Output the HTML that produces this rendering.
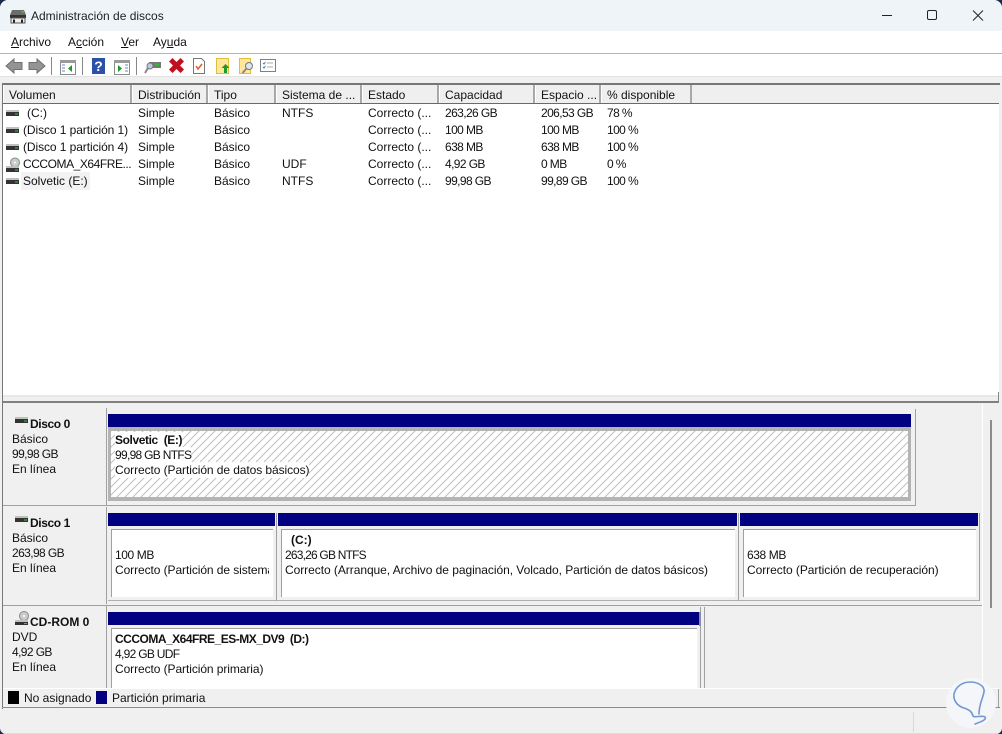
<!DOCTYPE html>
<html><head><meta charset="utf-8"><style>
html,body{margin:0;padding:0;background:#1a2a4a;width:1002px;height:734px;overflow:hidden}
#w{position:absolute;left:0;top:0;width:1002px;height:734px;background:#f0f0f0;border-radius:8px 8px 6px 6px;overflow:hidden;font:12px "Liberation Sans",sans-serif;color:#111}
#w div{position:absolute}
.t{white-space:nowrap;line-height:16px;height:16px}
.b{font-weight:bold}
.d{letter-spacing:-.6px}
.e{letter-spacing:-.08px}
.n{background:#000080;height:13px}
.l{background:#a0a0a0}
u{text-decoration:underline}
svg{position:absolute;overflow:visible}
.h{top:85px;height:18px;background:#efefef;border-right:2px solid #a8a8a8;box-sizing:border-box;border-left:1px solid #fff;line-height:20px;padding-left:5px;white-space:nowrap}
</style></head><body><div id="w">
<!-- title -->
<div style="left:0;top:0;width:1002px;height:31px;background:#eff4f9"></div>
<svg style="left:9px;top:9px" width="18" height="15" viewBox="0 0 18 15"><path d="M3 1h12l2 5H1z" fill="#6c6c6c"/><rect x="1" y="6" width="16" height="3" fill="#333"/><rect x="12" y="2" width="3" height="1.5" fill="#3c3"/><rect x="2" y="9" width="14" height="5" fill="#eee" stroke="#555"/><rect x="4" y="10.5" width="2" height="3" fill="#222"/><rect x="12" y="10.5" width="2" height="3" fill="#222"/></svg>
<div class="t" style="left:31px;top:8px;font-size:12px;color:#222">Administración de discos</div>
<svg style="left:880px;top:8px" width="110" height="16" viewBox="0 0 110 16" fill="none" stroke="#222" stroke-width="1"><path d="M2 7.5H12"/><rect x="47.5" y="2.5" width="9" height="9" rx="1.5"/><path d="M93 2.5l10 10M103 2.5l-10 10"/></svg>
<!-- menu -->
<div style="left:0;top:31px;width:1002px;height:22px;background:#fff"></div>
<div style="left:0;top:53px;width:1002px;height:1px;background:#b4b4bc"></div>
<div class="t" style="left:11px;top:34px"><u>A</u>rchivo</div>
<div class="t" style="left:68px;top:34px">A<u>c</u>ción</div>
<div class="t" style="left:121px;top:34px"><u>V</u>er</div>
<div class="t" style="left:153px;top:34px">Ay<u>u</u>da</div>
<!-- toolbar -->
<div style="left:0;top:54px;width:1002px;height:22px;background:#fff"></div>
<svg style="left:0;top:54px" width="290" height="22" viewBox="0 0 290 22">
<path d="M6 12l8-7v3.500h8v7h-8V19z" fill="#949494" stroke="#707070"/>
<path d="M45 12l-8-7v3.500h-8v7h8V19z" fill="#949494" stroke="#707070"/>
<rect x="51" y="3" width="1" height="18" fill="#888"/>
<rect x="60.500" y="6.500" width="15" height="14" fill="#fff" stroke="#8a8a8a"/><rect x="60" y="6" width="16" height="3" fill="#9a9a9a"/><path d="M72 11v7l-4-3.500z" fill="#1a9a2a"/><path d="M62 11h3M62 14h3M62 17h3" stroke="#6a8ac0"/>
<rect x="82" y="3" width="1" height="18" fill="#888"/>
<rect x="92" y="4" width="13" height="16" fill="#2c52a8"/><text x="98.500" y="17" text-anchor="middle" font-family="Liberation Sans" font-weight="bold" font-size="14" fill="#fff">?</text>
<rect x="114.500" y="6.500" width="15" height="14" fill="#fff" stroke="#8a8a8a"/><rect x="114" y="6" width="16" height="3" fill="#9a9a9a"/><path d="M118 11v7l4-3.500z" fill="#1a9a2a"/><path d="M125 11h3M125 14h3M125 17h3" stroke="#6a8ac0"/>
<rect x="136" y="3" width="1" height="18" fill="#888"/>
<rect x="149" y="8" width="12" height="6" fill="#777"/><rect x="155" y="9.500" width="4" height="2" fill="#2c2"/><circle cx="150" cy="12" r="3" fill="#bcd" stroke="#777"/><path d="M148 14l-3 5" stroke="#888" stroke-width="2"/>
<path d="M169 8l3.500-3.500 4 4 4-4L184 8l-4 4 4 4-3.500 3.500-4-4-4 4L169 16l4-4z" fill="#c01020" transform="translate(0,-.5)"/>
<path d="M193.500 4.500h8l3 3v12h-11z" fill="#fff" stroke="#777"/><path d="M196 12l2 3 4-5" fill="none" stroke="#e25a20" stroke-width="1.500"/>
<rect x="216.500" y="4.500" width="12" height="15" fill="#ffe89a" stroke="#e0bc40"/><path d="M225.500 10l4 4h-2.500v5h-3v-5H221.500z" fill="#1f9a2a"/>
<rect x="239.500" y="4.500" width="11" height="15" fill="#ffe89a" stroke="#e0bc40"/><circle cx="249" cy="12" r="3.500" fill="#dbe6f2" stroke="#777"/><path d="M246.500 14.500l-4 4.500" stroke="#888" stroke-width="2"/>
<rect x="260.500" y="5.500" width="15" height="12" fill="#fff" stroke="#808080"/><path d="M263 9l1 1 1.500-2M263 13l1 1 1.500-2" fill="none" stroke="#2a80d0"/><path d="M267 9h6M267 13h6" stroke="#aaa"/>
</svg>
<div style="left:0;top:76px;width:1002px;height:1px;background:#e2e2e2"></div>
<!-- list frame -->
<div style="left:2px;top:83px;width:998px;height:2px;background:#777"></div>
<div style="left:2px;top:83px;width:1px;height:626px;background:#777"></div>
<div style="left:3px;top:85px;width:996px;height:18px;background:#efefef"></div>
<div style="left:3px;top:103px;width:996px;height:1px;background:#6a6a6a"></div>
<div style="left:3px;top:104px;width:996px;height:291px;background:#fff"></div>
<div class="h" style="left:3px;width:129px">Volumen</div>
<div class="h" style="left:132px;width:76px">Distribución</div>
<div class="h" style="left:208px;width:68px">Tipo</div>
<div class="h" style="left:276px;width:86px">Sistema de ...</div>
<div class="h" style="left:362px;width:77px">Estado</div>
<div class="h" style="left:439px;width:96px">Capacidad</div>
<div class="h" style="left:535px;width:66px">Espacio ...</div>
<div class="h" style="left:601px;width:91px">% disponible</div>
<!-- rows -->
<svg style="left:6px;top:108px" width="14" height="80" viewBox="0 0 14 80">
<g><rect x="0" y="2" width="13" height="2" fill="#c0c0c0"/><rect x="0" y="4" width="13" height="4" fill="#333"/><rect x="9" y="5.500" width="3" height="1" fill="#3c3"/></g>
<g transform="translate(0,17)"><rect x="0" y="2" width="13" height="2" fill="#c0c0c0"/><rect x="0" y="4" width="13" height="4" fill="#333"/><rect x="9" y="5.500" width="3" height="1" fill="#3c3"/></g>
<g transform="translate(0,34)"><rect x="0" y="2" width="13" height="2" fill="#c0c0c0"/><rect x="0" y="4" width="13" height="4" fill="#333"/><rect x="9" y="5.500" width="3" height="1" fill="#3c3"/></g>
<g transform="translate(0,50)"><circle cx="9" cy="4.500" r="4.500" fill="#ccc" stroke="#888"/><circle cx="9" cy="4.500" r="1" fill="#fff"/><rect x="0" y="8" width="13" height="2" fill="#c0c0c0"/><rect x="0" y="10" width="13" height="4" fill="#333"/><rect x="9" y="11.500" width="3" height="1" fill="#3c3"/></g>
<g transform="translate(0,68)"><rect x="0" y="2" width="13" height="2" fill="#c0c0c0"/><rect x="0" y="4" width="13" height="4" fill="#333"/><rect x="9" y="5.500" width="3" height="1" fill="#3c3"/></g>
</svg>
<div style="left:21px;top:172px;width:69px;height:18px;background:#f2f2f2"></div>
<div class="t" style="left:27px;top:105px">(C:)</div><div class="t" style="left:138px;top:105px">Simple</div><div class="t" style="left:214px;top:105px">Básico</div><div class="t" style="left:282px;top:105px">NTFS</div><div class="t" style="left:368px;top:105px">Correcto (...</div><div class="t d" style="left:445px;top:105px">263,26 GB</div><div class="t d" style="left:541px;top:105px">206,53 GB</div><div class="t d" style="left:607px;top:105px">78 %</div>
<div class="t e" style="left:23px;top:122px">(Disco 1 partición 1)</div><div class="t" style="left:138px;top:122px">Simple</div><div class="t" style="left:214px;top:122px">Básico</div><div class="t" style="left:368px;top:122px">Correcto (...</div><div class="t d" style="left:445px;top:122px">100 MB</div><div class="t d" style="left:541px;top:122px">100 MB</div><div class="t d" style="left:607px;top:122px">100 %</div>
<div class="t e" style="left:23px;top:139px">(Disco 1 partición 4)</div><div class="t" style="left:138px;top:139px">Simple</div><div class="t" style="left:214px;top:139px">Básico</div><div class="t" style="left:368px;top:139px">Correcto (...</div><div class="t d" style="left:445px;top:139px">638 MB</div><div class="t d" style="left:541px;top:139px">638 MB</div><div class="t d" style="left:607px;top:139px">100 %</div>
<div class="t" style="left:23px;top:156px;letter-spacing:-.45px">CCCOMA_X64FRE...</div><div class="t" style="left:138px;top:156px">Simple</div><div class="t" style="left:214px;top:156px">Básico</div><div class="t" style="left:282px;top:156px">UDF</div><div class="t" style="left:368px;top:156px">Correcto (...</div><div class="t d" style="left:445px;top:156px">4,92 GB</div><div class="t d" style="left:541px;top:156px">0 MB</div><div class="t d" style="left:607px;top:156px">0 %</div>
<div class="t" style="left:23px;top:173px">Solvetic (E:)</div><div class="t" style="left:138px;top:173px">Simple</div><div class="t" style="left:214px;top:173px">Básico</div><div class="t" style="left:282px;top:173px">NTFS</div><div class="t" style="left:368px;top:173px">Correcto (...</div><div class="t d" style="left:445px;top:173px">99,98 GB</div><div class="t d" style="left:541px;top:173px">99,89 GB</div><div class="t d" style="left:607px;top:173px">100 %</div>
<!-- splitter -->
<div style="left:3px;top:395px;width:996px;height:2px;background:#e8e8e8"></div>
<div style="left:3px;top:401px;width:996px;height:2px;background:#808080"></div>
<div style="left:998px;top:392px;width:1px;height:11px;background:#888"></div>
<!-- disk area -->
<div style="left:3px;top:403px;width:996px;height:286px;background:#f0f0f0"></div>
<div style="left:982px;top:404px;width:1px;height:285px;background:#fff"></div>
<div style="left:990px;top:420px;width:2px;height:188px;background:#8c8c8c"></div>
<!-- disk 0 -->
<div style="left:106px;top:408px;width:1px;height:97px;background:#a0a0a0"></div>
<div class="l" style="left:3px;top:505px;width:103px;height:1px"></div>
<svg style="left:15px;top:417px" width="14" height="10"><rect x="0" y="0" width="13" height="2" fill="#c0c0c0"/><rect x="0" y="2" width="13" height="4" fill="#333"/><rect x="9" y="3.500" width="3" height="1" fill="#3c3"/></svg>
<div class="t b" style="left:30px;top:416px;letter-spacing:-.4px">Disco 0</div>
<div class="t" style="left:12px;top:431px">Básico</div>
<div class="t d" style="left:12px;top:446px">99,98 GB</div>
<div class="t" style="left:12px;top:461px">En línea</div>
<div style="left:915px;top:409px;width:1px;height:96px;background:#a0a0a0"></div>
<div style="left:106px;top:505px;width:810px;height:1px;background:#a0a0a0"></div>
<div class="n" style="left:108px;top:414px;width:803px"></div>
<div style="left:108px;top:427px;width:803px;height:74px;background:#b4b4b4"></div>
<svg style="left:111px;top:431px" width="797" height="66"><defs><pattern id="hp" width="8" height="8" patternUnits="userSpaceOnUse"><rect width="8" height="8" fill="#fff"/><path d="M-1 9L9-1M-1 1L1-1M7 9L9 7" stroke="#b8b8b8" stroke-width=".9"/></pattern></defs><rect width="797" height="66" fill="url(#hp)"/></svg>
<div class="t b" style="left:115px;top:432px;background:#fff;letter-spacing:-.4px">Solvetic&nbsp; (E:)</div>
<div class="t" style="left:115px;top:447px;background:#fff;letter-spacing:-.7px">99,98 GB NTFS</div>
<div class="t e" style="left:115px;top:462px;background:#fff">Correcto (Partición de datos básicos)</div>
<!-- disk 1 -->
<div style="left:106px;top:507px;width:1px;height:97px;background:#a0a0a0"></div>
<div class="l" style="left:3px;top:605px;width:103px;height:1px"></div>
<svg style="left:15px;top:516px" width="14" height="10"><rect x="0" y="0" width="13" height="2" fill="#c0c0c0"/><rect x="0" y="2" width="13" height="4" fill="#333"/><rect x="9" y="3.500" width="3" height="1" fill="#3c3"/></svg>
<div class="t b" style="left:30px;top:515px;letter-spacing:-.4px">Disco 1</div>
<div class="t" style="left:12px;top:530px">Básico</div>
<div class="t d" style="left:12px;top:545px">263,98 GB</div>
<div class="t" style="left:12px;top:560px">En línea</div>
<div style="left:106px;top:605px;width:876px;height:1px;background:#a0a0a0"></div>
<div style="left:108px;top:600px;width:871px;height:1px;background:#b0b0b0"></div>
<div style="left:979px;top:513px;width:1px;height:88px;background:#a0a0a0"></div>
<div class="n" style="left:108px;top:513px;width:167px"></div>
<div class="n" style="left:278px;top:513px;width:459px"></div>
<div class="n" style="left:740px;top:513px;width:238px"></div>
<div class="l" style="left:276px;top:513px;width:1px;height:88px"></div>
<div class="l" style="left:738px;top:513px;width:1px;height:88px"></div>
<div style="left:108px;top:527px;width:167px;height:73px;background:#f0f0f0"></div>
<div style="left:111px;top:529px;width:162px;height:68px;background:#fff;border-top:1px solid #a0a0a0;border-left:1px solid #a0a0a0;box-sizing:border-box"></div>
<div style="left:278px;top:527px;width:459px;height:73px;background:#f0f0f0"></div>
<div style="left:281px;top:529px;width:454px;height:68px;background:#fff;border-top:1px solid #a0a0a0;border-left:1px solid #a0a0a0;box-sizing:border-box"></div>
<div style="left:740px;top:527px;width:238px;height:73px;background:#f0f0f0"></div>
<div style="left:743px;top:529px;width:233px;height:68px;background:#fff;border-top:1px solid #a0a0a0;border-left:1px solid #a0a0a0;box-sizing:border-box"></div>
<div class="t" style="left:115px;top:547px;letter-spacing:-.4px">100 MB</div>
<div class="t e" style="left:115px;top:562px;width:154px;overflow:hidden">Correcto (Partición de sistema)</div>
<div class="t b" style="left:291px;top:532px">(C:)</div>
<div class="t" style="left:285px;top:547px;letter-spacing:-.8px">263,26 GB NTFS</div>
<div class="t" style="left:285px;top:562px;letter-spacing:-.05px">Correcto (Arranque, Archivo de paginación, Volcado, Partición de datos básicos)</div>
<div class="t" style="left:747px;top:547px;letter-spacing:-.4px">638 MB</div>
<div class="t" style="left:747px;top:562px;letter-spacing:-.05px">Correcto (Partición de recuperación)</div>
<!-- cdrom -->
<div style="left:106px;top:606px;width:1px;height:83px;background:#a0a0a0"></div>
<div style="left:704px;top:607px;width:1px;height:82px;background:#a0a0a0"></div>
<div style="left:700px;top:607px;width:1px;height:82px;background:#a0a0a0"></div>
<svg style="left:15px;top:611px" width="15" height="15"><circle cx="9" cy="5" r="4.500" fill="#ccc" stroke="#888"/><circle cx="9" cy="5" r="1" fill="#fff"/><rect x="0" y="9" width="13" height="2" fill="#c0c0c0"/><rect x="0" y="11" width="13" height="3" fill="#333"/><rect x="9" y="12" width="3" height="1" fill="#3c3"/></svg>
<div class="t b" style="left:30px;top:614px">CD-ROM 0</div>
<div class="t" style="left:12px;top:629px">DVD</div>
<div class="t d" style="left:12px;top:644px">4,92 GB</div>
<div class="t" style="left:12px;top:659px">En línea</div>
<div class="n" style="left:108px;top:612px;width:591px"></div>
<div style="left:699px;top:612px;width:2px;height:14px;background:#8a8aa0"></div>
<div style="left:111px;top:628px;width:586px;height:61px;background:#fff;border-top:1px solid #a0a0a0;border-left:1px solid #a0a0a0;box-sizing:border-box"></div>
<div class="t b" style="left:115px;top:631px;letter-spacing:-.5px">CCCOMA_X64FRE_ES-MX_DV9&nbsp; (D:)</div>
<div class="t" style="left:115px;top:646px;letter-spacing:-.7px">4,92 GB UDF</div>
<div class="t e" style="left:115px;top:661px">Correcto (Partición primaria)</div>
<!-- legend -->
<div style="left:3px;top:688px;width:996px;height:1px;background:#fff"></div>
<div style="left:3px;top:689px;width:996px;height:18px;background:#f0f0f0"></div>
<div style="left:8px;top:691px;width:11px;height:13px;background:#000"></div>
<div class="t" style="left:24px;top:690px">No asignado</div>
<div style="left:96px;top:691px;width:11px;height:13px;background:#000080"></div>
<div class="t" style="left:112px;top:690px">Partición primaria</div>
<div style="left:2px;top:707px;width:998px;height:1px;background:#8c8c8c"></div>
<div style="left:998px;top:689px;width:1px;height:18px;background:#a0a0a0"></div>
<div style="left:913px;top:712px;width:1px;height:20px;background:#d8d8d8"></div>
<!-- watermark -->
<div style="left:946px;top:678px;width:50px;height:50px;border-radius:50%;background:#f5f6f9"></div>
<svg style="left:946px;top:678px" width="50" height="50" viewBox="0 0 50 50" fill="none" stroke="#7398d0" stroke-width="1.600" stroke-linecap="round"><path d="M29 46C34 44 41 42 39 39C37 37 28 40 27 38C26 34 24 32 18 30C11 28 7 22 8 16C10 8 17 4 24 4C32 4 39 8 38 14C37 20 33 26 33 36"/></svg>
<div style="left:0;top:733px;width:1002px;height:1px;background:#dcdcdc"></div>
</div></body></html>
